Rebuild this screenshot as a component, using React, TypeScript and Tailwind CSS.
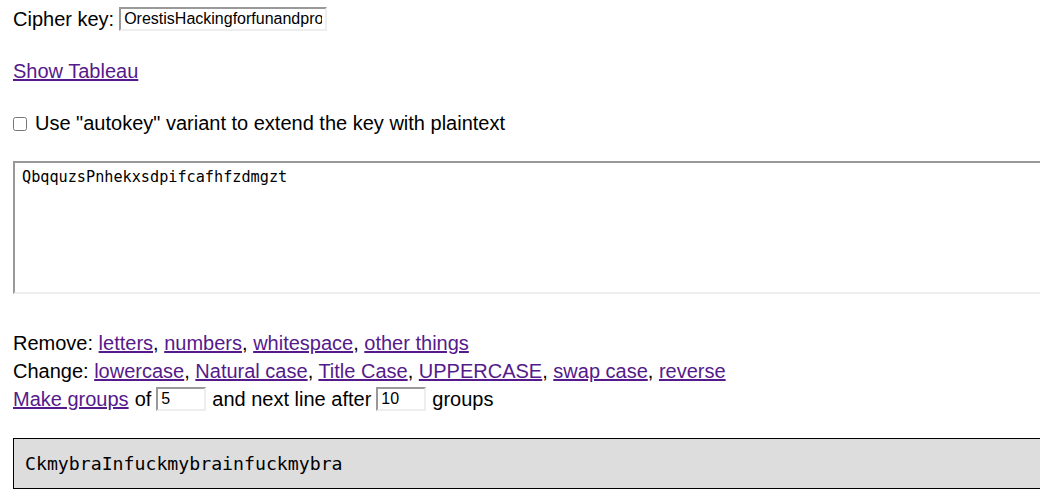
import { useState } from "react";

const sans = "font-['Liberation_Sans',Arial,sans-serif]";
const mono = "font-['DejaVu_Sans_Mono',Consolas,monospace]";

function A({ children }: { children: React.ReactNode }) {
  return (
    <a href="#" className="text-[#551a8b] underline">
      {children}
    </a>
  );
}

export default function App() {
  const [key, setKey] = useState("OrestisHackingforfunandprofit");
  const [text, setText] = useState("QbqquzsPnhekxsdpifcafhfzdmgzt");
  const [group, setGroup] = useState("5");
  const [line, setLine] = useState("10");

  return (
    <div className={`w-[1040px] h-[496px] overflow-hidden bg-white text-black text-[20px] leading-[28px] ${sans}`}>
      <div className="pl-[13px] pt-[5px] w-[1200px]">
        <div className="flex items-center h-[28px]">
          <span>Cipher key:</span>
          <input
            value={key}
            onChange={(e) => setKey(e.target.value)}
            className={`ml-[5px] w-[208px] h-[24px] px-[3px] text-[16px] border-2 border-t-[#999] border-l-[#999] border-r-[#eee] border-b-[#eee] outline-none ${sans}`}
          />
        </div>

        <div className="mt-[24px] h-[28px]">
          <A>Show Tableau</A>
        </div>

        <label className="mt-[24px] h-[28px] flex items-center">
          <input type="checkbox" className="w-[14px] h-[14px] mr-[8px] mt-[1px]" />
          Use "autokey" variant to extend the key with plaintext
        </label>

        <textarea
          value={text}
          onChange={(e) => setText(e.target.value)}
          className={`block mt-[24px] w-[1100px] h-[133px] resize-none px-[7px] pt-[4px] text-[15.2px] leading-[20px] border-2 border-t-[#999] border-l-[#999] border-r-[#eee] border-b-[#eee] outline-none ${mono}`}
        />

        <div className="mt-[35px]">
          Remove: <A>letters</A>, <A>numbers</A>, <A>whitespace</A>, <A>other things</A>
        </div>
        <div>
          Change: <A>lowercase</A>, <A>Natural case</A>, <A>Title Case</A>, <A>UPPERCASE</A>,{" "}
          <A>swap case</A>, <A>reverse</A>
        </div>
        <div className="flex items-center h-[28px]">
          <A>Make groups</A>
          <span className="ml-[6px]">of</span>
          <input
            value={group}
            onChange={(e) => setGroup(e.target.value)}
            className={`ml-[5px] w-[50px] h-[24px] px-[3px] text-[16px] border-2 border-t-[#999] border-l-[#999] border-r-[#eee] border-b-[#eee] outline-none ${sans}`}
          />
          <span className="ml-[6px]">and next line after</span>
          <input
            value={line}
            onChange={(e) => setLine(e.target.value)}
            className={`ml-[5px] w-[50px] h-[24px] px-[3px] text-[16px] border-2 border-t-[#999] border-l-[#999] border-r-[#eee] border-b-[#eee] outline-none ${sans}`}
          />
          <span className="ml-[6px]">groups</span>
        </div>

        <div
          className={`mt-[25px] w-[1100px] h-[51px] bg-[#dddddd] border border-black flex items-center pl-[11px] text-[18.2px] ${mono}`}
        >
          CkmybraInfuckmybrainfuckmybra
        </div>
      </div>
    </div>
  );
}
